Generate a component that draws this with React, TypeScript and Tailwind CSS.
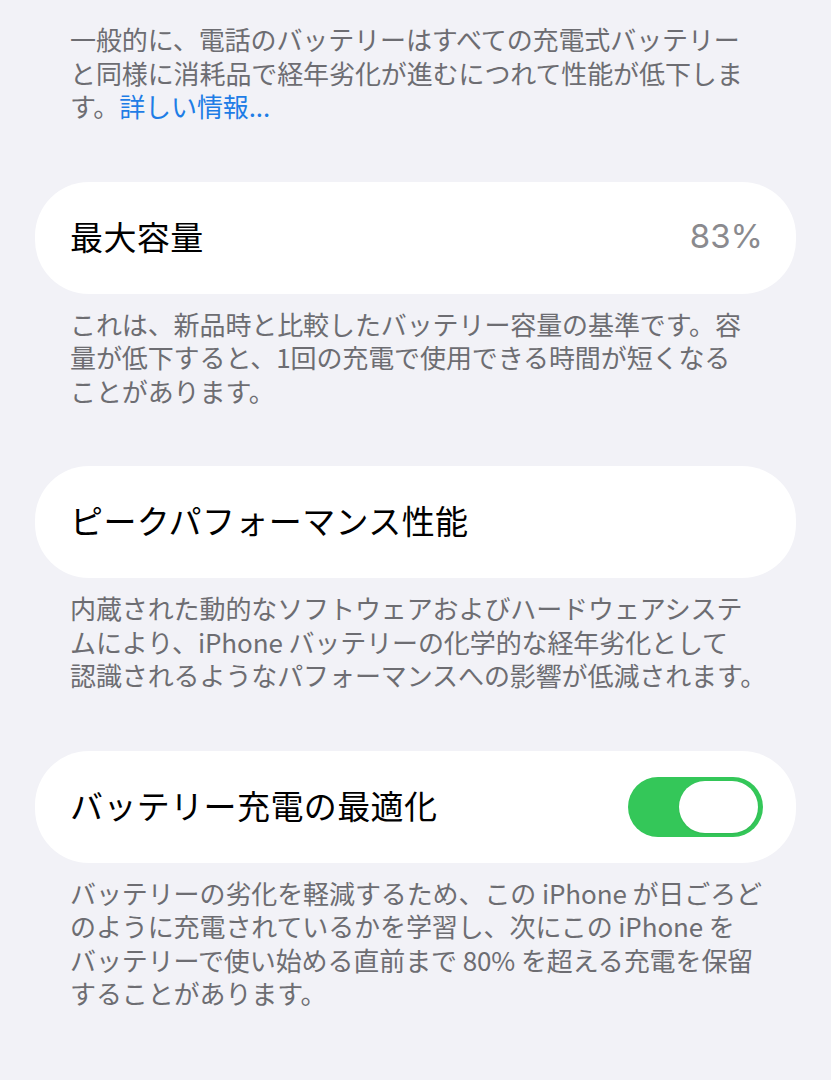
const jp = { fontFamily: '"Noto Sans CJK JP", "Noto Sans", sans-serif' };

function Footnote({ lines, link }: { lines: string[]; link?: string }) {
  return (
    <div
      className="px-[70px] text-[26px] leading-[33.5px] tracking-[-0.1px] text-[#6d6d72]"
      style={jp}
    >
      {lines.map((line, i) => (
        <span key={i} className="block whitespace-nowrap">
          {line}
          {link && i === lines.length - 1 && (
            <span className="text-[#1e7de6]">{link}</span>
          )}
        </span>
      ))}
    </div>
  );
}

function Card({ children }: { children: React.ReactNode }) {
  return (
    <div className="mx-[35px] flex h-[112px] items-center justify-between rounded-[54px] bg-white pl-[35px] pr-[33px]">
      {children}
    </div>
  );
}

function Title({ text }: { text: string }) {
  return (
    <span className="-mt-[2px] text-[33px] tracking-[0.4px] text-black" style={jp}>
      {text}
    </span>
  );
}

function Toggle() {
  return (
    <div className="flex h-[60px] w-[135px] items-center justify-end rounded-full bg-[#34c759] pr-[5px]">
      <div className="h-[52px] w-[79px] rounded-full bg-white shadow-[0_1px_2px_rgba(0,0,0,0.08)]" />
    </div>
  );
}

export default function App() {
  return (
    <div className="min-h-[1080px] w-full bg-[#f2f2f7] pt-[22px]">
      <Footnote
        lines={[
          "一般的に、電話のバッテリーはすべての充電式バッテリー",
          "と同様に消耗品で経年劣化が進むにつれて性能が低下しま",
          "す。",
        ]}
        link="詳しい情報..."
      />

      <div className="mt-[59px]">
        <Card>
          <Title text="最大容量" />
          <span
            className="-mt-[2px] text-[33px] text-[#8a8a8e]"
            style={{ fontFamily: 'Inter, "Noto Sans", sans-serif' }}
          >
            83%
          </span>
        </Card>
      </div>
      <div className="mt-[13px]">
        <Footnote
          lines={[
            "これは、新品時と比較したバッテリー容量の基準です。容",
            "量が低下すると、1回の充電で使用できる時間が短くなる",
            "ことがあります。",
          ]}
        />
      </div>

      <div className="mt-[59px]">
        <Card>
          <Title text="ピークパフォーマンス性能" />
        </Card>
      </div>
      <div className="mt-[13px]">
        <Footnote
          lines={[
            "内蔵された動的なソフトウェアおよびハードウェアシステ",
            "ムにより、iPhone バッテリーの化学的な経年劣化として",
            "認識されるようなパフォーマンスへの影響が低減されます。",
          ]}
        />
      </div>

      <div className="mt-[59px]">
        <Card>
          <Title text="バッテリー充電の最適化" />
          <Toggle />
        </Card>
      </div>
      <div className="mt-[13px]">
        <Footnote
          lines={[
            "バッテリーの劣化を軽減するため、この iPhone が日ごろど",
            "のように充電されているかを学習し、次にこの iPhone を",
            "バッテリーで使い始める直前まで 80% を超える充電を保留",
            "することがあります。",
          ]}
        />
      </div>
    </div>
  );
}
